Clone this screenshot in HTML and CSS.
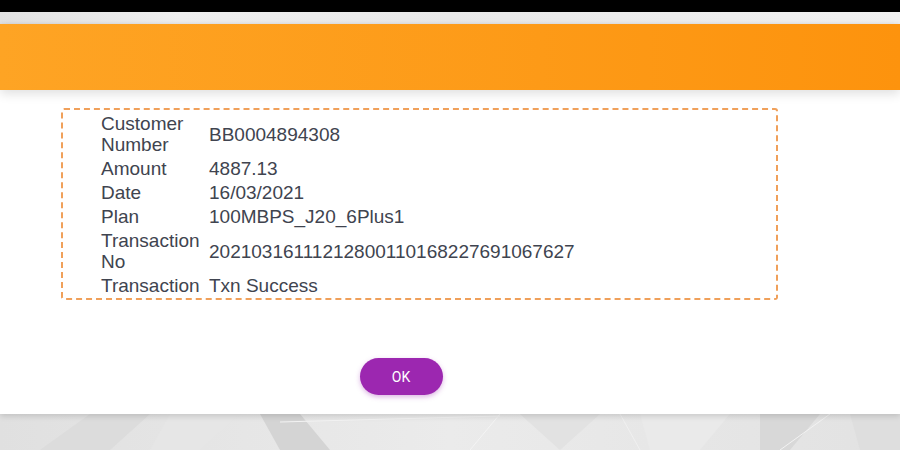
FILE: index.html
```html
<!DOCTYPE html>
<html>
<head>
<meta charset="utf-8">
<link rel="stylesheet" href="styles.css">
</head>
<body>
<div class="topbar"></div>
<div class="band"></div>
<div class="dialog">
  <div class="header"></div>
  <div class="content">
    <div class="box">
      <table class="details">
        <tr><td class="label">Customer Number</td><td class="value">BB0004894308</td></tr>
        <tr><td class="label">Amount</td><td class="value">4887.13</td></tr>
        <tr><td class="label">Date</td><td class="value">16/03/2021</td></tr>
        <tr><td class="label">Plan</td><td class="value">100MBPS_J20_6Plus1</td></tr>
        <tr><td class="label">Transaction No</td><td class="value">20210316111212800110168227691067627</td></tr>
        <tr><td class="label">Transaction</td><td class="value">Txn Success</td></tr>
      </table>
    </div>
    <div class="actions">
      <button class="ok">OK</button>
    </div>
  </div>
</div>
<div class="bg-bottom">
  <svg width="900" height="36" viewBox="0 0 900 36">
    <polygon points="40,36 90,0 150,0 110,36" fill="#dcdcdc"/>
    <polygon points="150,36 170,0 240,0 200,36" fill="#e6e6e6"/>
    <polygon points="260,0 300,0 330,36 280,36" fill="#d4d4d4"/>
    <polygon points="520,0 600,0 560,36" fill="#e2e2e2"/>
    <polygon points="640,0 730,0 700,36 650,36" fill="#eaeaea"/>
    <polygon points="760,0 820,0 790,36 760,36" fill="#d8d8d8"/>
    <polygon points="850,0 900,0 900,36 860,36" fill="#dedede"/>
    <line x1="280" y1="8" x2="500" y2="2" stroke="#f4f4f4" stroke-width="1"/>
    <line x1="500" y1="0" x2="470" y2="36" stroke="#f4f4f4" stroke-width="1"/>
    <line x1="620" y1="0" x2="640" y2="36" stroke="#f0f0f0" stroke-width="1"/>
    <line x1="830" y1="0" x2="780" y2="36" stroke="#f2f2f2" stroke-width="1"/>
  </svg>
</div>
</body>
</html>
```

FILE: styles.css
```css
html, body {
  margin: 0;
  padding: 0;
}
body {
  width: 900px;
  height: 450px;
  overflow: hidden;
  background: #e4e4e4;
  font-family: "Liberation Sans", Arial, sans-serif;
}
.topbar {
  height: 12px;
  background: #000;
}
.band {
  height: 12px;
  background: linear-gradient(90deg, #e2e2e2 0%, #efefef 20%, #e9e9e9 50%, #f1f1f1 100%);
}
.dialog {
  background: #fff;
  height: 390px;
  box-shadow: 0 2px 6px rgba(0,0,0,0.15);
  position: relative;
  z-index: 1;
}
.header {
  height: 66px;
  background: linear-gradient(90deg, #fea424 0%, #fd9a17 60%, #fd930d 100%);
  box-shadow: 0 4px 10px rgba(0,0,0,0.12);
}
.content {
  padding: 19px 0 0 61px;
}
.box {
  width: 675px;
  height: 188px;
  border: 2px dashed #f0a05a;
  border-radius: 3px;
  padding: 0 0 0 38px;
  margin-top: -1px;
}
.details {
  border-collapse: separate;
  border-spacing: 0 1px;
  margin-top: 1px;
  color: #40444f;
  font-size: 19px;
  line-height: 21px;
}
.details td {
  padding: 1px 0;
  vertical-align: middle;
}
.details .label {
  width: 108px;
}
.actions {
  width: 680px;
  display: flex;
  justify-content: center;
  margin-top: 58px;
}
.ok {
  width: 83px;
  height: 37px;
  border: none;
  border-radius: 19px;
  background: #9c27b0;
  color: #fff;
  font-family: Roboto, "Liberation Sans", sans-serif;
  font-size: 14px;
  box-shadow: 0 2px 5px rgba(156,39,176,0.35);
}
.bg-bottom {
  height: 36px;
  background: linear-gradient(90deg, #e0e0e0, #ebebeb 50%, #e2e2e2);
}
.bg-bottom svg {
  display: block;
}
```
